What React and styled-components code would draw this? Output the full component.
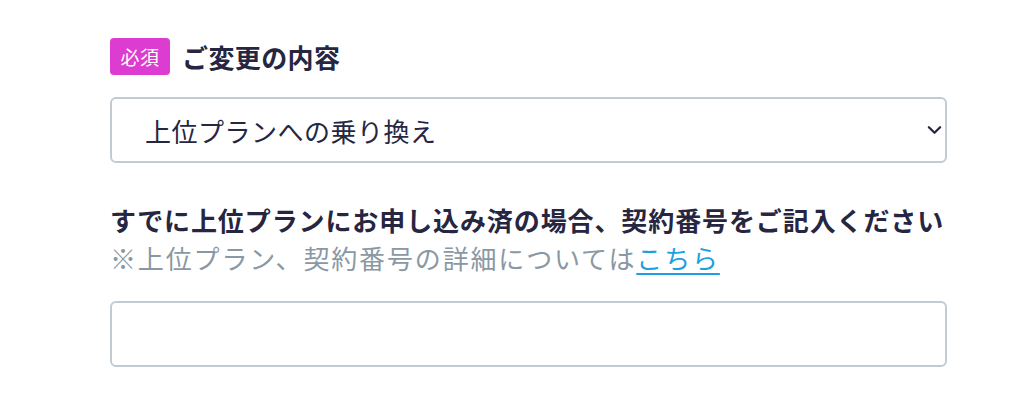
import React from "react"
import styled, { createGlobalStyle } from "styled-components"

const GlobalStyle = createGlobalStyle`
  html, body {
    margin: 0;
    padding: 0;
    background: #ffffff;
  }
  body {
    font-family: "Noto Sans CJK JP", "Noto Sans", sans-serif;
    color: #262641;
  }
`

const App = () => {
  return (
    <>
      <GlobalStyle />
      <Form>
        <Field>
          <LabelRow>
            <Badge>必須</Badge>
            <Label>ご変更の内容</Label>
          </LabelRow>
          <SelectWrap>
            <Select defaultValue="upgrade">
              <option value="upgrade">上位プランへの乗り換え</option>
            </Select>
            <Chevron viewBox="0 0 16 10" aria-hidden="true">
              <path d="M2 2 L8 8 L14 2" />
            </Chevron>
          </SelectWrap>
        </Field>

        <Field $spaced>
          <Question>すでに上位プランにお申し込み済の場合、契約番号をご記入ください</Question>
          <Note>
            ※上位プラン、契約番号の詳細については<Link href="#">こちら</Link>
          </Note>
          <Input type="text" />
        </Field>
      </Form>
    </>
  )
}

const Form = styled.form`
  width: 837px;
  margin-left: 110px;
  padding-top: 38px;
`

const Field = styled.div`
  display: flex;
  flex-direction: column;
  margin-top: ${(p) => (p.$spaced ? "38px" : "0")};
`

const LabelRow = styled.div`
  display: flex;
  align-items: center;
  gap: 12px;
  margin-bottom: 22px;
`

const Badge = styled.span`
  display: inline-flex;
  align-items: center;
  justify-content: center;
  width: 60px;
  height: 37px;
  border-radius: 4px;
  background: #dc3ccf;
  color: #ffffff;
  font-size: 19px;
  letter-spacing: 0.5px;
`

const Label = styled.span`
  font-size: 26px;
  font-weight: 700;
  letter-spacing: 0.4px;
  line-height: 37px;
`

const SelectWrap = styled.div`
  position: relative;
`

const Select = styled.select`
  appearance: none;
  -webkit-appearance: none;
  width: 100%;
  height: 66px;
  box-sizing: border-box;
  border: 2px solid #c3cbd2;
  border-radius: 6px;
  background: #ffffff;
  padding: 0 60px 0 33px;
  font-family: inherit;
  font-size: 26px;
  letter-spacing: 0.5px;
  color: #262641;
  outline: none;
`

const Chevron = styled.svg`
  position: absolute;
  right: 5px;
  top: 28px;
  width: 15px;
  height: 10px;
  fill: none;
  stroke: #262641;
  stroke-width: 2.4;
  stroke-linecap: round;
  stroke-linejoin: round;
  pointer-events: none;
`

const Question = styled.div`
  font-size: 26px;
  font-weight: 700;
  line-height: 38px;
  letter-spacing: 0.9px;
  white-space: nowrap;
`

const Note = styled.div`
  font-size: 26px;
  line-height: 38px;
  letter-spacing: 1.85px;
  color: #8a98a4;
  white-space: nowrap;
`

const Link = styled.a`
  color: #1d9fe4;
  text-decoration: underline;
  text-underline-offset: 4px;
  text-decoration-thickness: 2px;
`

const Input = styled.input`
  margin-top: 24px;
  width: 100%;
  height: 66px;
  box-sizing: border-box;
  border: 2px solid #c3cbd2;
  border-radius: 6px;
  background: #ffffff;
  padding: 0 20px;
  font-family: inherit;
  font-size: 26px;
  outline: none;
`

export default App
